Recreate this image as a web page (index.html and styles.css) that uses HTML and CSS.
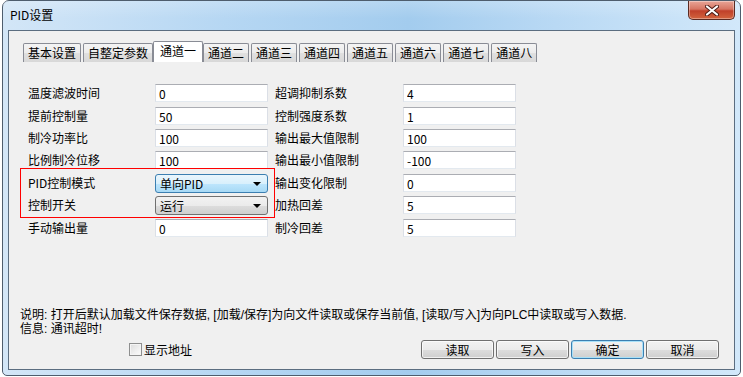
FILE: index.html
```
<!DOCTYPE html>
<html lang="zh-CN">
<head>
    <meta charset="UTF-8">
    <title>PID设置</title>
    <link rel="stylesheet" href="styles.css">
</head>
<body>
    <div class="window">
        <div class="titlebar">
            <span class="title">PID设置</span>
            <button class="close-btn" type="button">
                <svg width="14" height="11" viewBox="0 0 14 11">
                    <path d="M2 1.5 L12 9.5 M12 1.5 L2 9.5" stroke="#4a1a14" stroke-width="4" stroke-linecap="round"/>
                    <path d="M2 1.5 L12 9.5 M12 1.5 L2 9.5" stroke="#fff" stroke-width="2.2" stroke-linecap="round"/>
                </svg>
            </button>
        </div>

        <div class="client">
            <div class="tabs">
                <span class="tab">基本设置</span>
                <span class="tab">自整定参数</span>
                <span class="tab active">通道一</span>
                <span class="tab">通道二</span>
                <span class="tab">通道三</span>
                <span class="tab">通道四</span>
                <span class="tab">通道五</span>
                <span class="tab">通道六</span>
                <span class="tab">通道七</span>
                <span class="tab">通道八</span>
            </div>

            <div class="panel">
                <div class="form">
                    <label>温度滤波时间</label>
                    <input class="field" type="text" value="0">
                    <label class="right">超调抑制系数</label>
                    <input class="field" type="text" value="4">

                    <label>提前控制量</label>
                    <input class="field" type="text" value="50">
                    <label class="right">控制强度系数</label>
                    <input class="field" type="text" value="1">

                    <label>制冷功率比</label>
                    <input class="field" type="text" value="100">
                    <label class="right">输出最大值限制</label>
                    <input class="field" type="text" value="100">

                    <label>比例制冷位移</label>
                    <input class="field" type="text" value="100">
                    <label class="right">输出最小值限制</label>
                    <input class="field" type="text" value="-100">

                    <label>PID控制模式</label>
                    <div class="combo focused"><span>单向PID</span><i class="arrow"></i></div>
                    <label class="right">输出变化限制</label>
                    <input class="field" type="text" value="0">

                    <label>控制开关</label>
                    <div class="combo"><span>运行</span><i class="arrow"></i></div>
                    <label class="right">加热回差</label>
                    <input class="field" type="text" value="5">

                    <label>手动输出量</label>
                    <input class="field" type="text" value="0">
                    <label class="right">制冷回差</label>
                    <input class="field" type="text" value="5">

                    <div class="mark"></div>
                </div>
            </div>

            <div class="notes">
                <div>说明: 打开后默认加载文件保存数据, [加载/保存]为向文件读取或保存当前值, [读取/写入]为向PLC中读取或写入数据.</div>
                <div>信息: 通讯超时!</div>
            </div>

            <div class="footer">
                <label class="check"><span class="box"></span>显示地址</label>
                <div class="buttons">
                    <button class="btn" type="button">读取</button>
                    <button class="btn" type="button">写入</button>
                    <button class="btn default" type="button">确定</button>
                    <button class="btn" type="button">取消</button>
                </div>
            </div>
        </div>
    </div>
</body>
</html>
```

FILE: styles.css
```
/* General */
html, body {
    margin: 0;
    padding: 0;
    background: #ffffff;
}

body {
    width: 743px;
    height: 377px;
    overflow: hidden;
    font-family: "Noto Sans CJK SC", "Liberation Sans", sans-serif;
    font-size: 12px;
    color: #000;
}

/* Window frame */
.window {
    box-sizing: border-box;
    margin-left: 2px;
    width: 739px;
    height: 376px;
    border: 1px solid #4e5d6d;
    border-radius: 7px 7px 5px 5px;
    background: linear-gradient(90deg, #d3e6f7 0%, #b6d7f3 30%, #a3ccee 55%, #b9d9f4 75%, #d2e8fa 100%);
    display: flex;
    flex-direction: column;
}

.titlebar {
    height: 29px;
    display: flex;
    align-items: flex-start;
    padding-left: 7px;
    background: linear-gradient(180deg, rgba(255,255,255,0.2), rgba(255,255,255,0) 60%);
}

.title {
    margin-top: 6px;
    line-height: 16px;
    font-size: 12px;
}

.close-btn {
    margin-left: auto;
    margin-right: 5px;
    width: 47px;
    height: 19px;
    padding: 0;
    border: 1px solid #5a2a22;
    border-top: none;
    border-radius: 0 0 5px 5px;
    background: linear-gradient(180deg, #e8a597 0%, #d67563 45%, #c0402a 55%, #d2643e 100%);
    display: flex;
    align-items: center;
    justify-content: center;
    box-shadow: inset 0 0 0 1px rgba(255,255,255,0.35);
}

/* Client area */
.client {
    flex: 1;
    margin: 0 5px 5px 5px;
    border: 1px solid #5b6d80;
    background: #f0f0f0;
    display: flex;
    flex-direction: column;
}

/* Tabs */
.tabs {
    display: flex;
    align-items: flex-end;
    margin-top: 12px;
    padding-left: 14px;
    height: 19px;
}

.tab {
    height: 18px;
    line-height: 18px;
    padding: 0 4px;
    margin-right: 2px;
    border: 1px solid #898c95;
    border-bottom: none;
    border-radius: 2px 2px 0 0;
    background: linear-gradient(180deg, #f4f4f4 0%, #ececec 50%, #e0e0e0 51%, #d8d8d8 100%);
    white-space: nowrap;
}

.tab.active {
    height: 20px;
    padding: 0 6px;
    margin: 0 0 0 -2px;
    background: #ffffff;
}

/* Form */
.panel {
    flex: 1;
}

.form {
    position: relative;
    margin: 22px 0 0 19px;
    display: grid;
    grid-template-columns: 127px 113px 135px 113px;
    grid-template-rows: 23px 22px 22px 23px 22px 23px 18px;
    align-items: start;
}

.form label {
    line-height: 18px;
    white-space: nowrap;
}

.form label.right {
    padding-left: 7px;
}

.field {
    box-sizing: border-box;
    width: 113px;
    height: 18px;
    margin: 0;
    padding: 0 3px;
    border: 1px solid #dbdfe6;
    border-top-color: #abadb3;
    border-bottom-color: #e3e9ef;
    background: #fff;
    font-family: "Noto Sans CJK SC", "Liberation Sans", sans-serif;
    font-size: 12px;
    color: #000;
    outline: none;
}

.combo {
    box-sizing: border-box;
    width: 113px;
    height: 19px;
    padding: 0 4px;
    border: 1px solid #707070;
    border-radius: 3px;
    background: linear-gradient(180deg, #f2f2f2 0%, #ebebeb 50%, #dddddd 51%, #cfcfcf 100%);
    display: flex;
    align-items: center;
    line-height: 17px;
}

.combo.focused {
    border-color: #3c7fb1;
    background: linear-gradient(180deg, #eaf6fd 0%, #d9f0fc 50%, #bee6fd 51%, #a7d9f5 100%);
}

.arrow {
    margin-left: auto;
    margin-right: 2px;
    width: 0;
    height: 0;
    border-left: 4px solid transparent;
    border-right: 4px solid transparent;
    border-top: 4px solid #000;
}

/* Red annotation box */
.mark {
    position: absolute;
    left: -8px;
    top: 84px;
    width: 253px;
    height: 48px;
    border: 1px solid #ff0000;
    pointer-events: none;
}

/* Notes */
.notes {
    margin: 0 0 4px 11px;
    font-family: "Liberation Sans", "Noto Sans CJK SC", sans-serif;
    line-height: 14px;
    white-space: nowrap;
}

/* Footer */
.footer {
    display: flex;
    align-items: center;
    height: 19px;
    padding: 0 15px 10px 0;
}

.check {
    margin-left: 120px;
    display: flex;
    align-items: center;
    line-height: 14px;
}

.box {
    box-sizing: border-box;
    width: 13px;
    height: 13px;
    margin-right: 2px;
    border: 1px solid #8e8f8f;
    background: linear-gradient(135deg, #dcdcdc 0%, #f0f0f0 60%, #fbfbfb 100%);
    box-shadow: inset 0 0 0 1px #f4f4f4;
}

.buttons {
    margin-left: auto;
    display: flex;
    gap: 2px;
}

.btn {
    box-sizing: border-box;
    width: 73px;
    height: 19px;
    padding: 0;
    border: 1px solid #707070;
    border-radius: 3px;
    background: linear-gradient(180deg, #f2f2f2 0%, #ebebeb 50%, #dddddd 51%, #cfcfcf 100%);
    box-shadow: inset 0 0 0 1px rgba(255,255,255,0.7);
    font-family: "Noto Sans CJK SC", "Liberation Sans", sans-serif;
    font-size: 12px;
    line-height: 17px;
    color: #000;
}

.btn.default {
    border-color: #3c7fb1;
    box-shadow: inset 0 0 0 1px #a8e0f8;
}
```
